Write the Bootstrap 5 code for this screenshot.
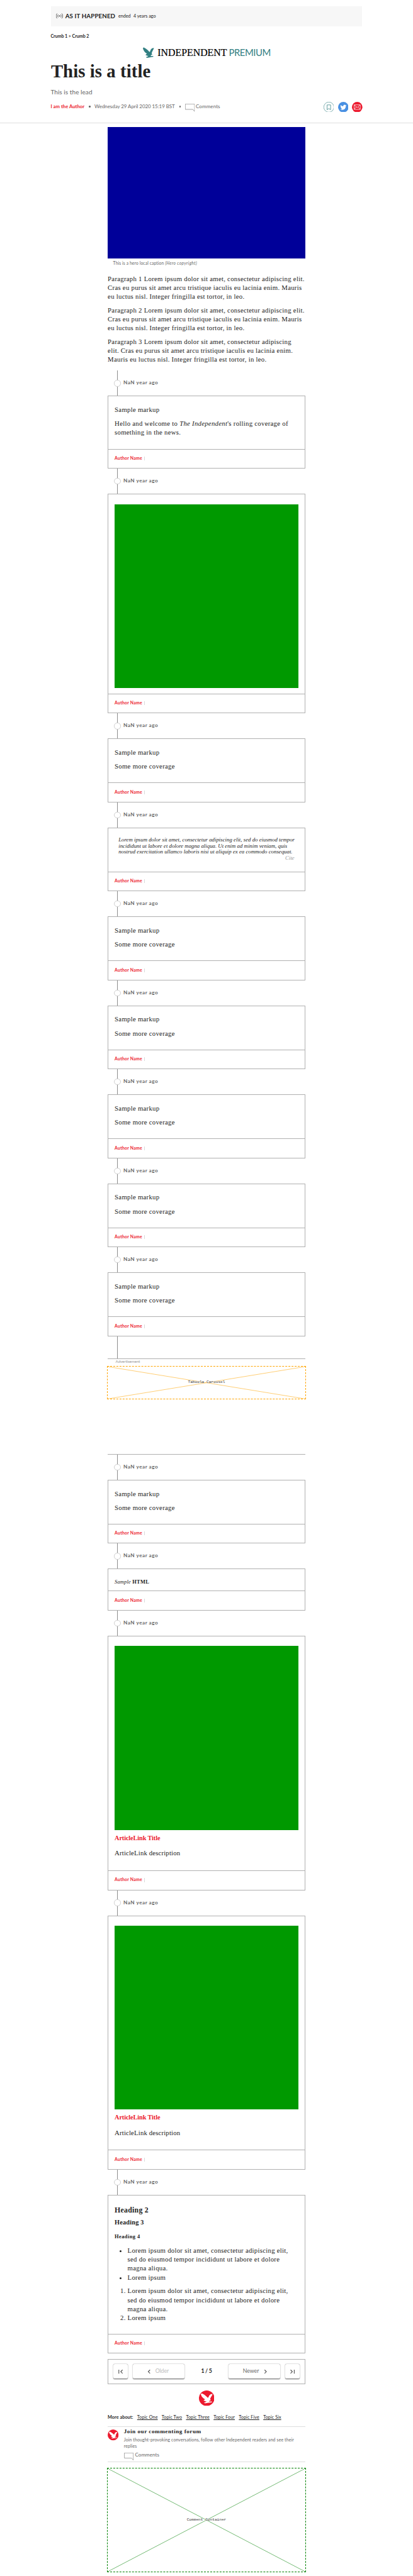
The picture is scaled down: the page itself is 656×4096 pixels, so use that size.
<!DOCTYPE html>
<html lang="en">
<head>
<meta charset="utf-8">
<meta name="viewport" content="width=device-width, initial-scale=1">
<title>This is a title</title>
<link href="https://cdn.jsdelivr.net/npm/bootstrap@5.3.0/dist/css/bootstrap.min.css" rel="stylesheet">
<style>
:root{--u:.5127px;--line:#b0b0b0;--rule:#dedede;--ink:#222;--grey:#666;--red:#ec1a2e;--teal:#338083}
body{background:#fff;color:var(--ink);font-family:Lato,sans-serif;font-size:calc(14*var(--u));line-height:1.4;overflow-x:hidden}
h1,h2,h3,h4,p,ul,ol,figure,blockquote{margin:0}
a{color:inherit}
.serif{font-family:"Liberation Serif",serif}
.wide{width:calc(964*var(--u))}
.story{width:calc(612*var(--u))}

/* page head */
.live-bar{margin-top:calc(20*var(--u));height:calc(62*var(--u));background:#f7f7f7;padding:0 calc(16*var(--u)) calc(2*var(--u))}
.live-bar svg{width:calc(21*var(--u));height:calc(17*var(--u));margin-right:calc(7.5*var(--u))}
.live-bar strong{font-size:calc(19*var(--u));letter-spacing:calc(.25*var(--u));margin-right:calc(9.4*var(--u))}
.live-bar .when{gap:calc(8.6*var(--u));padding-top:calc(1*var(--u))}
.crumbs{font-weight:700;line-height:calc(20*var(--u));letter-spacing:calc(-.16*var(--u));margin:calc(20.6*var(--u)) 0 0 calc(-1*var(--u))}
.brand{margin-top:calc(24.4*var(--u));height:calc(34*var(--u));line-height:calc(35*var(--u))}
.brand svg{width:calc(38*var(--u));height:calc(34*var(--u));margin-right:calc(9*var(--u))}
.brand .name{font-size:calc(31*var(--u));color:#000;margin-right:calc(6*var(--u));-webkit-text-stroke:.2px #000}
.brand .tier{font-size:calc(29*var(--u));letter-spacing:calc(-.9*var(--u));color:var(--teal)}
.headline{font-size:calc(56*var(--u));line-height:calc(62*var(--u));letter-spacing:calc(.17*var(--u));font-weight:700;margin-top:calc(10.1*var(--u))}
.standfirst{font-size:calc(19.5*var(--u));line-height:calc(28*var(--u));letter-spacing:calc(.13*var(--u));color:var(--grey);margin:calc(17.4*var(--u)) 0 0 calc(-1*var(--u))}
.byline{height:calc(34*var(--u));margin:calc(16.5*var(--u)) calc(-2*var(--u)) 0 calc(-1*var(--u));font-size:calc(15.5*var(--u));color:var(--grey)}
.byline .who{font-size:calc(15*var(--u));letter-spacing:calc(.06*var(--u));color:var(--red);font-weight:700}
.byline .stamp{letter-spacing:calc(-.09*var(--u))}
.byline .facts{padding-bottom:calc(2*var(--u))}
.byline .said{margin-left:calc(4*var(--u))}
.pip{width:calc(5*var(--u));height:calc(5*var(--u));border-radius:50%;background:var(--grey);margin:0 calc(12*var(--u)) 0 calc(14*var(--u))}
.bubble{width:calc(30*var(--u));height:calc(25*var(--u));margin-top:calc(8*var(--u));overflow:visible}
.said{font-size:calc(15.5*var(--u));letter-spacing:calc(.26*var(--u));color:var(--grey)}
.social{gap:calc(12*var(--u))}
.social svg{width:calc(32.6*var(--u));height:calc(32.6*var(--u))}
.head-rule{margin-top:calc(32*var(--u));border-top:1px solid var(--rule)}

/* lead picture and copy */
.hero-pic{margin-top:calc(11*var(--u));height:calc(408*var(--u));background:#000099}
.hero-note{font-size:calc(13*var(--u));line-height:calc(18*var(--u));letter-spacing:calc(.28*var(--u));color:var(--grey);padding:calc(6.7*var(--u)) 0 0 calc(16.6*var(--u))}
.hero-note em{letter-spacing:calc(.8*var(--u))}
.copy p,.copy li{font-family:"Liberation Serif",serif;font-size:calc(21*var(--u));line-height:calc(27.4*var(--u));letter-spacing:calc(.53*var(--u))}
.copy p{margin-bottom:calc(15.7*var(--u));white-space:nowrap}
.copy .snug p{letter-spacing:calc(.3*var(--u))}
.intro{margin-top:calc(23.1*var(--u));height:calc(300.2*var(--u))}

/* timeline */
.tick{position:relative;height:calc(78*var(--u));padding-left:calc(20*var(--u));gap:calc(8.6*var(--u))}
.tick::before{content:"";position:absolute;left:calc(29*var(--u));top:0;bottom:0;width:1px;background:#8c8c8c}
.tick i{position:relative;width:calc(20*var(--u));height:calc(20*var(--u));border:1px solid #d0d0d0;border-radius:50%;background:#fff}
.tick span{font-size:calc(16*var(--u));font-weight:700;letter-spacing:calc(1*var(--u));color:var(--grey);padding-bottom:calc(1*var(--u))}
.tick-end{height:calc(68*var(--u))}
.entry{border:1px solid var(--line);height:calc(198*var(--u))}
.entry-tall{height:calc(226*var(--u))}
.entry-pic{height:calc(681*var(--u))}
.entry-html{height:calc(130*var(--u))}
.entry-link{height:calc(789*var(--u))}
.entry-list{height:calc(492*var(--u))}
.entry-in{padding:calc(26.6*var(--u)) calc(19.5*var(--u)) 0}
.entry-by{height:calc(60*var(--u));border-top:1px solid var(--line);padding:0 calc(19.5*var(--u)) calc(2*var(--u));font-size:calc(13.5*var(--u));font-weight:700;letter-spacing:calc(.42*var(--u));color:var(--red)}
.entry-by::after{content:"";width:1px;height:calc(12*var(--u));background:#d8d8d8;margin:calc(1*var(--u)) 0 0 calc(6*var(--u))}
.entry-in.flush{padding-top:calc(30*var(--u))}
.green{height:calc(570*var(--u));background:#009900}
.link-title{font-size:calc(20*var(--u));line-height:calc(27.4*var(--u));letter-spacing:calc(-.19*var(--u));font-weight:700;color:var(--red);margin:calc(12.2*var(--u)) 0 calc(18.6*var(--u))}
.quote{padding:calc(1*var(--u)) 0 0 calc(12*var(--u));font-size:calc(17*var(--u));line-height:calc(18.8*var(--u));letter-spacing:calc(.07*var(--u));font-style:italic;white-space:nowrap}
.quote cite{display:block;text-align:right;padding-right:calc(12*var(--u));color:#999}
.raw{font-size:calc(16.5*var(--u));line-height:calc(24*var(--u));letter-spacing:calc(.55*var(--u))}
.raw em{letter-spacing:calc(.3*var(--u))}
.h-two{font-size:calc(23*var(--u));line-height:calc(28*var(--u));letter-spacing:calc(.53*var(--u));font-weight:700;padding-top:calc(5*var(--u))}
.h-three{font-size:calc(20*var(--u));line-height:calc(24*var(--u));letter-spacing:calc(.38*var(--u));font-weight:700;margin-top:calc(12.5*var(--u))}
.h-four{font-size:calc(16.5*var(--u));line-height:calc(20*var(--u));letter-spacing:calc(.78*var(--u));font-weight:700;margin:calc(21.2*var(--u)) 0 calc(19.4*var(--u))}
.copy ul,.copy ol{padding-left:calc(40*var(--u));margin-bottom:calc(15.5*var(--u));white-space:nowrap}

/* placeholders */
.promo{height:calc(299*var(--u));border:solid var(--line);border-width:1px 0}
.promo small{display:block;font-size:calc(12*var(--u));line-height:calc(14*var(--u));letter-spacing:calc(-.1*var(--u));color:#999;padding:0 0 0 calc(24.4*var(--u));margin:calc(1*var(--u)) 0 calc(6.6*var(--u))}
.slot{margin:0 calc(-2*var(--u));border:1px dashed;display:grid;place-items:center;font-family:"Liberation Mono",monospace;font-size:calc(12*var(--u))}
.slot>*{grid-area:1/1}
.slot svg{width:100%;height:100%;stroke:currentColor;stroke-width:.55}
.slot span{color:#333;text-shadow:0 0 1px #fff,0 0 1px #fff,0 0 1px #fff}
.slot-orange{height:calc(104*var(--u));color:#ffa500}
.slot-green{height:calc(324*var(--u));margin-top:calc(18*var(--u));color:#008000}

/* pager and footer */
.pager{margin-top:calc(16.5*var(--u));height:calc(78*var(--u));border:1px solid var(--line);padding:0 calc(15*var(--u));gap:calc(14*var(--u));font-size:calc(17*var(--u));color:var(--grey)}
.key{width:calc(46*var(--u));height:calc(45*var(--u));border-radius:calc(5*var(--u));box-shadow:0 .5px 1.4px rgba(0,0,0,.65)}
.key-wide{width:calc(160*var(--u));gap:calc(16*var(--u))}
.key span,.pager .count{padding-bottom:calc(4*var(--u))}
.key .spent{color:#bbb}
.key svg{width:calc(14*var(--u));height:calc(12*var(--u));fill:none;stroke:#505050;stroke-width:2.2;overflow:visible}
.key svg.thin{width:calc(7*var(--u))}
.pager .count{font-weight:700;letter-spacing:calc(-.6*var(--u));color:var(--ink)}
.roundel{width:calc(48*var(--u));height:calc(48*var(--u));margin-top:calc(20*var(--u))}
.topics{margin-top:calc(27*var(--u));line-height:calc(20*var(--u));gap:calc(12.3*var(--u));letter-spacing:calc(.2*var(--u));white-space:nowrap}
.topics a{text-underline-offset:.5px;text-decoration-thickness:.5px}
.forum{margin-top:calc(15.5*var(--u));height:calc(112*var(--u));border:solid var(--rule);border-width:1px 0;padding-top:calc(4.5*var(--u));gap:calc(16*var(--u))}
.forum>svg{flex:none;width:calc(34*var(--u));height:calc(34*var(--u));margin-top:calc(5*var(--u))}
.forum h2{font-size:calc(18*var(--u));line-height:calc(22*var(--u));letter-spacing:calc(.96*var(--u));font-weight:700;margin-bottom:calc(6.4*var(--u))}
.forum p{font-size:calc(13.5*var(--u));line-height:calc(18*var(--u));letter-spacing:calc(.25*var(--u));color:var(--grey)}
.forum .talk{height:calc(20*var(--u));margin-top:calc(8*var(--u));gap:calc(4.5*var(--u))}
.forum .bubble{height:calc(24*var(--u));margin-top:calc(10*var(--u))}
</style>
</head>
<body>
<svg class="d-none" xmlns="http://www.w3.org/2000/svg">
  <symbol id="eagle" viewBox="0 0 104 102"><path d="M7 1 4 7 0 10 4 20 8 30 16 42 26 52 38 60 24 72 34 76 40 80 50 80 46 87 28 94 38 100 58 96 98 89 96 82 72 84 78 72 88 70 82 56 90 36 98 22 104 7 86 10 74 22 68 38 62 46 48 30 30 14Z"/></symbol>
  <symbol id="bubble" viewBox="0 0 30 25"><path d="M.6.6h28.800v23.200l-5.500-6.400H.6z" fill="none" stroke="#6b6b6b" stroke-width="1.2"/></symbol>
  <symbol id="roundel" viewBox="0 0 48 48"><circle cx="24" cy="24" r="24" fill="#ec1a2e"/><svg x="5.5" y="8.5" width="37" height="32" viewBox="0 0 104 102" preserveAspectRatio="none"><use href="#eagle" width="104" height="102" fill="#fff"/></svg></symbol>
</svg>

<header>
  <div class="wide mx-auto">
    <div class="live-bar d-flex align-items-center">
      <svg viewBox="0 0 21 17" fill="none" stroke="#222" stroke-width="1.4"><circle cx="10.5" cy="8.5" r="1.8" fill="#222" stroke="none"/><path d="M6.8 4.2a6 6 0 0 0 0 8.6M14.2 4.2a6 6 0 0 1 0 8.6M3.2 1a11 11 0 0 0 0 15M17.8 1a11 11 0 0 1 0 15"/></svg>
      <strong>AS IT HAPPENED</strong>
      <span class="when d-flex"><span>ended</span><span>4 years ago</span></span>
    </div>
    <nav class="crumbs">Crumb 1 &gt; Crumb 2</nav>
    <div class="brand d-flex justify-content-center">
      <svg fill="#338083"><use href="#eagle"/></svg>
      <span class="name serif">INDEPENDENT</span><span class="tier">PREMIUM</span>
    </div>
    <h1 class="headline serif">This is a title</h1>
    <p class="standfirst">This is the lead</p>
    <div class="byline d-flex justify-content-between align-items-center">
      <div class="facts d-flex align-items-center">
        <span class="who">I am the Author</span>
        <span class="pip"></span>
        <span class="stamp">Wednesday 29 April 2020 15:19 BST</span>
        <span class="pip"></span>
        <svg class="bubble"><use href="#bubble"/></svg>
        <span class="said">Comments</span>
      </div>
      <div class="social d-flex">
        <svg viewBox="0 0 33 33" fill="none" stroke="#338083"><circle cx="16.5" cy="16.5" r="15.9" stroke-width="1.2"/><path d="M11 9.500h11v15l-5.500-3.500-5.500 3.500z" stroke-width="1.5"/></svg>
        <svg viewBox="0 0 32 32"><circle cx="16" cy="16" r="16" fill="#4990e2"/><path transform="translate(6.5 6.5) scale(1.18)" fill="#fff" d="M5.026 15c6.038 0 9.341-5.003 9.341-9.334 0-.14 0-.282-.006-.422A6.685 6.685 0 0 0 16 3.542a6.658 6.658 0 0 1-1.889.518 3.301 3.301 0 0 0 1.447-1.817 6.533 6.533 0 0 1-2.087.793A3.286 3.286 0 0 0 7.875 6.03a9.325 9.325 0 0 1-6.767-3.429 3.289 3.289 0 0 0 1.018 4.382A3.323 3.323 0 0 1 .64 6.575v.045a3.288 3.288 0 0 0 2.632 3.218 3.203 3.203 0 0 1-.865.115 3.23 3.23 0 0 1-.614-.057 3.283 3.283 0 0 0 3.067 2.277A6.588 6.588 0 0 1 .78 13.58a6.32 6.32 0 0 1-.78-.045A9.344 9.344 0 0 0 5.026 15z"/></svg>
        <svg viewBox="0 0 32 32"><circle cx="16" cy="16" r="16" fill="#ec1a2e"/><path d="M6.700 9h18.600v14H6.700zM7 9.300l9 8 9-8M7 22.700l6.500-7.500M25 22.700l-6.500-7.500" fill="none" stroke="#fff" stroke-width="1.4"/></svg>
      </div>
    </div>
  </div>
  <div class="head-rule"></div>
</header>

<main class="story copy mx-auto">
  <figure>
    <div class="hero-pic"></div>
    <figcaption class="hero-note">This is a hero local caption <em>(Hero copyright)</em></figcaption>
  </figure>
  <div class="intro">
    <p>Paragraph 1 Lorem ipsum dolor sit amet, consectetur adipiscing elit.<br>Cras eu purus sit amet arcu tristique iaculis eu lacinia enim. Mauris<br>eu luctus nisl. Integer fringilla est tortor, in leo.</p>
    <p>Paragraph 2 Lorem ipsum dolor sit amet, consectetur adipiscing elit.<br>Cras eu purus sit amet arcu tristique iaculis eu lacinia enim. Mauris<br>eu luctus nisl. Integer fringilla est tortor, in leo.</p>
    <p>Paragraph 3 Lorem ipsum dolor sit amet, consectetur adipiscing<br>elit. Cras eu purus sit amet arcu tristique iaculis eu lacinia enim.<br>Mauris eu luctus nisl. Integer fringilla est tortor, in leo.</p>
  </div>

  <div class="tick d-flex align-items-center"><i></i><span>NaN year ago</span></div>
  <article class="entry entry-tall d-flex flex-column">
    <div class="entry-in flex-fill"><p>Sample markup</p><p>Hello and welcome to <em>The Independent</em>'s rolling coverage of<br>something in the news.</p></div>
    <footer class="entry-by d-flex align-items-center">Author Name</footer>
  </article>

  <div class="tick d-flex align-items-center"><i></i><span>NaN year ago</span></div>
  <article class="entry entry-pic d-flex flex-column">
    <div class="entry-in flush flex-fill"><div class="green"></div></div>
    <footer class="entry-by d-flex align-items-center">Author Name</footer>
  </article>

  <div class="tick d-flex align-items-center"><i></i><span>NaN year ago</span></div>
  <article class="entry d-flex flex-column">
    <div class="entry-in flex-fill"><p>Sample markup</p><p>Some more coverage</p></div>
    <footer class="entry-by d-flex align-items-center">Author Name</footer>
  </article>

  <div class="tick d-flex align-items-center"><i></i><span>NaN year ago</span></div>
  <article class="entry d-flex flex-column">
    <div class="entry-in flex-fill"><blockquote class="quote serif">Lorem ipsum dolor sit amet, consectetur adipiscing elit, sed do eiusmod tempor<br>incididunt ut labore et dolore magna aliqua. Ut enim ad minim veniam, quis<br>nostrud exercitation ullamco laboris nisi ut aliquip ex ea commodo consequat.<cite>Cite</cite></blockquote></div>
    <footer class="entry-by d-flex align-items-center">Author Name</footer>
  </article>

  <div class="tick d-flex align-items-center"><i></i><span>NaN year ago</span></div>
  <article class="entry d-flex flex-column">
    <div class="entry-in flex-fill"><p>Sample markup</p><p>Some more coverage</p></div>
    <footer class="entry-by d-flex align-items-center">Author Name</footer>
  </article>

  <div class="tick d-flex align-items-center"><i></i><span>NaN year ago</span></div>
  <article class="entry d-flex flex-column">
    <div class="entry-in flex-fill"><p>Sample markup</p><p>Some more coverage</p></div>
    <footer class="entry-by d-flex align-items-center">Author Name</footer>
  </article>

  <div class="tick d-flex align-items-center"><i></i><span>NaN year ago</span></div>
  <article class="entry d-flex flex-column">
    <div class="entry-in flex-fill"><p>Sample markup</p><p>Some more coverage</p></div>
    <footer class="entry-by d-flex align-items-center">Author Name</footer>
  </article>

  <div class="tick d-flex align-items-center"><i></i><span>NaN year ago</span></div>
  <article class="entry d-flex flex-column">
    <div class="entry-in flex-fill"><p>Sample markup</p><p>Some more coverage</p></div>
    <footer class="entry-by d-flex align-items-center">Author Name</footer>
  </article>

  <div class="tick d-flex align-items-center"><i></i><span>NaN year ago</span></div>
  <article class="entry d-flex flex-column">
    <div class="entry-in flex-fill"><p>Sample markup</p><p>Some more coverage</p></div>
    <footer class="entry-by d-flex align-items-center">Author Name</footer>
  </article>

  <div class="tick tick-end"></div>
  <aside class="promo">
    <small>Advertisement</small>
    <div class="slot slot-orange">
      <svg viewBox="0 0 100 100" preserveAspectRatio="none"><path d="M0 0 100 100M0 100 100 0" vector-effect="non-scaling-stroke"/></svg>
      <span>Taboola Carousel</span>
    </div>
  </aside>

  <div class="tick d-flex align-items-center"><i></i><span>NaN year ago</span></div>
  <article class="entry d-flex flex-column">
    <div class="entry-in flex-fill"><p>Sample markup</p><p>Some more coverage</p></div>
    <footer class="entry-by d-flex align-items-center">Author Name</footer>
  </article>

  <div class="tick d-flex align-items-center"><i></i><span>NaN year ago</span></div>
  <article class="entry entry-html d-flex flex-column">
    <div class="entry-in raw serif flex-fill"><em>Sample</em> <b>HTML</b></div>
    <footer class="entry-by d-flex align-items-center">Author Name</footer>
  </article>

  <div class="tick d-flex align-items-center"><i></i><span>NaN year ago</span></div>
  <article class="entry entry-link d-flex flex-column">
    <div class="entry-in flush flex-fill"><div class="green"></div><h3 class="link-title serif">ArticleLink Title</h3><div class="snug"><p>ArticleLink description</p></div></div>
    <footer class="entry-by d-flex align-items-center">Author Name</footer>
  </article>

  <div class="tick d-flex align-items-center"><i></i><span>NaN year ago</span></div>
  <article class="entry entry-link d-flex flex-column">
    <div class="entry-in flush flex-fill"><div class="green"></div><h3 class="link-title serif">ArticleLink Title</h3><div class="snug"><p>ArticleLink description</p></div></div>
    <footer class="entry-by d-flex align-items-center">Author Name</footer>
  </article>

  <div class="tick d-flex align-items-center"><i></i><span>NaN year ago</span></div>
  <article class="entry entry-list d-flex flex-column">
    <div class="entry-in flex-fill">
      <h2 class="h-two serif">Heading 2</h2>
      <h3 class="h-three serif">Heading 3</h3>
      <h4 class="h-four serif">Heading 4</h4>
      <ul><li>Lorem ipsum dolor sit amet, consectetur adipiscing elit,<br>sed do eiusmod tempor incididunt ut labore et dolore<br>magna aliqua.</li><li>Lorem ipsum</li></ul>
      <ol><li>Lorem ipsum dolor sit amet, consectetur adipiscing elit,<br>sed do eiusmod tempor incididunt ut labore et dolore<br>magna aliqua.</li><li>Lorem ipsum</li></ol>
    </div>
    <footer class="entry-by d-flex align-items-center">Author Name</footer>
  </article>
</main>

<section class="story mx-auto">
  <nav class="pager d-flex align-items-center">
    <span class="key d-flex align-items-center justify-content-center"><svg viewBox="0 0 14 12"><path d="M1.500 0v12M13 .500 7.500 6l5.500 5.500"/></svg></span>
    <span class="key key-wide d-flex align-items-center justify-content-center"><svg class="thin" viewBox="0 0 7 12"><path d="M6.500.500 1 6l5.500 5.500"/></svg><span class="spent">Older</span></span>
    <span class="count flex-fill text-center">1 / 5</span>
    <span class="key key-wide d-flex align-items-center justify-content-center"><span>Newer</span><svg class="thin" viewBox="0 0 7 12"><path d="M.500.500 6 6l-5.500 5.500"/></svg></span>
    <span class="key d-flex align-items-center justify-content-center"><svg viewBox="0 0 14 12"><path d="M12.500 0v12M1 .500 6.500 6 1 11.500"/></svg></span>
  </nav>
  <svg class="roundel d-block mx-auto"><use href="#roundel"/></svg>
  <div class="topics d-flex">
    <strong>More about:</strong>
    <a href="#">Topic One</a><a href="#">Topic Two</a><a href="#">Topic Three</a><a href="#">Topic Four</a><a href="#">Topic Five</a><a href="#">Topic Six</a>
  </div>
  <div class="forum d-flex align-items-start">
    <svg><use href="#roundel"/></svg>
    <div>
      <h2 class="serif">Join our commenting forum</h2>
      <p class="text-nowrap">Join thought-provoking conversations, follow other Independent readers and see their<br>replies</p>
      <div class="talk d-flex align-items-center"><svg class="bubble"><use href="#bubble"/></svg><span class="said">Comments</span></div>
    </div>
  </div>
  <div class="slot slot-green">
    <svg viewBox="0 0 100 100" preserveAspectRatio="none"><path d="M0 0 100 100M0 100 100 0" vector-effect="non-scaling-stroke"/></svg>
    <span>Comment Container</span>
  </div>
</section>
<script src="https://cdn.jsdelivr.net/npm/bootstrap@5.3.0/dist/js/bootstrap.bundle.min.js"></script>
</body>
</html>
